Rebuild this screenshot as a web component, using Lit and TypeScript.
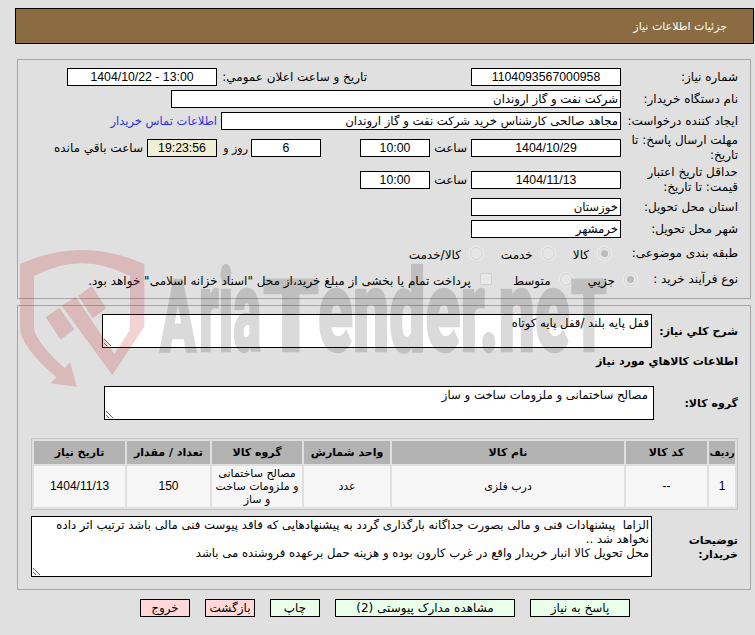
import { LitElement, html, css } from "lit";
import { customElement } from "lit/decorators.js";

@customElement("app-root")
export class AppRoot extends LitElement {
  static styles = css`
    :host {
      display: block;
      position: relative;
      width: 755px;
      height: 635px;
      overflow: hidden;
      background: #e0e0e0;
      color: #000;
      direction: rtl;
      font-family: "DejaVu Sans", sans-serif;
      font-size: 12px;
    }
    .num { font-family: "Liberation Sans", sans-serif; font-size: 12px; }
    .header {
      box-sizing: border-box;
      height: 36px;
      margin: 8px 1px 0 15px;
      padding-right: 26px;
      background: #8b6c42;
      border: 1px solid #000;
      color: #fff;
      font-size: 11px;
      display: flex;
      align-items: center;
    }
    .panel {
      border: 1px solid #a6a6a6;
      margin: 0 4px 0 17px;
      box-sizing: border-box;
    }
    .p1 { margin-top: 15px; height: 240px; padding: 8px 12px 0 0; }
    .p2 { margin-top: 6px; height: 285px; padding: 8px 12px 0 0; }
    .form {
      display: grid;
      grid-template-columns: 117px 1fr;
      grid-template-rows: 18px 18px 18px 28px 28px 18px 18px 22px 22px;
      row-gap: 4px;
    }
    .lbl { display: flex; align-items: center; line-height: 15px; padding-left: 4px; }
    .cell { display: flex; align-items: center; }
    .box {
      box-sizing: border-box;
      height: 18px;
      border: 1px solid #000;
      background: #fff;
      font-size: 11.7px;
      display: flex;
      align-items: center;
      padding: 0 2px;
      white-space: nowrap;
      overflow: hidden;
      flex: none;
    }
    .box.num { font-size: 12.3px; }
    .c { justify-content: center; }
    .w150 { width: 150px; }
    .w70 { width: 70px; }
    .w450 { width: 450px; }
    .w400 { width: 400px; }
    .timer { background: #efefd6; }
    .ml1 { margin-right: 104px; width: 150px; white-space: nowrap; }
    .link { color: #3030e0; font-size: 11.5px; margin-right: 4px; white-space: nowrap; }
    .sa { width: 41px; padding-right: 4px; box-sizing: border-box; }
    .gap39 { margin-right: 39px; }
    .rooz { width: 34px; padding-right: 3px; box-sizing: border-box; white-space: nowrap; font-size: 11px; }
    .rem { margin-right: 4px; white-space: nowrap; }
    .radio {
      box-sizing: border-box;
      width: 13px;
      height: 13px;
      border-radius: 50%;
      background: #e6e6e6;
      border: 1px solid #d2d2d2;
      box-shadow: 0 0 0 1px #ececec;
      flex: none;
      display: flex;
      align-items: center;
      justify-content: center;
    }
    .radio.on::after {
      content: "";
      width: 7px;
      height: 7px;
      border-radius: 50%;
      background: #bcbcbc;
    }
    .check {
      box-sizing: border-box;
      width: 12px;
      height: 12px;
      border: 1px solid #cfcfcf;
      border-radius: 2px;
      background: #e8e8e8;
      flex: none;
    }
    .t { margin-top: 3px; white-space: nowrap; }
    .opts { margin-right: 10px; }
    .opts .t { margin-right: 9px; margin-left: 18px; }
    .opts2 { margin-right: -16px; }
    .opts2 .t { margin-right: 9px; margin-left: 15px; }
    .opts2 .t.m { margin-left: 21px; }
    .b { font-weight: bold; font-size: 11px; }
    .row { display: grid; align-items: center; }
    .a { grid-template-columns: 86px 550px; height: 34px; }
    .sec { margin-top: 5px; height: 18px; line-height: 18px; }
    .g { grid-template-columns: 84px 550px; height: 34px; margin-top: 15px; }
    textarea {
      box-sizing: border-box;
      display: block;
      border: 1px solid #000;
      border-radius: 0;
      outline: 0;
      margin: 0;
      padding: 1px 2px;
      background: #fff;
      color: #000;
      font: inherit;
      font-size: 11.7px;
      line-height: 14px;
      direction: rtl;
      width: 100%;
      overflow: hidden;
      resize: both;
    }
    .a textarea, .g textarea { height: 34px; }
    .g textarea { padding-right: 5px; }
    .tbl {
      margin: 18px 0 0 0;
      box-sizing: border-box;
      width: 707px;
      height: 72px;
      table-layout: fixed;
      border: 1px solid #c4c4c4;
      border-spacing: 2px;
      border-collapse: separate;
      font-size: 11px;
    }
    .tbl th { background: #b3b3b3; height: 23px; padding: 0; font-weight: bold; }
    .tbl th.narrow { font-size: 9.5px; }
    .tbl td { background: #f6f6f6; height: 41px; padding: 0; text-align: center; line-height: 13px; white-space: nowrap; }
    .d { grid-template-columns: 86px 621px; height: 61px; margin-top: 6px; }
    .d textarea { height: 61px; }
    .d .b { line-height: 14px; padding-top: 3px; }
    .btns {
      display: flex;
      gap: 15px;
      margin: 9px 125px 0 0;
    }
    .btn {
      box-sizing: border-box;
      height: 18px;
      border: 1px solid #000;
      background: #e9ffe9;
      display: flex;
      align-items: center;
      justify-content: center;
      white-space: nowrap;
    }
    .pink { background: #ffd9d9; }
    .mark {
      position: absolute;
      left: 0;
      top: 240px;
      width: 640px;
      height: 160px;
      pointer-events: none;
      direction: ltr;
    }
    .mark-logo { fill: rgba(190, 30, 30, 0.2); }
    .mark-word { opacity: 0.14; }
    .mark-text {
      fill: #000;
      stroke: #000;
      stroke-width: 2.5px;
      font-family: "Roboto", sans-serif;
      font-weight: 900;
      font-size: 115px;
    }
    .mark-text.cap { font-size: 100px; }
  `;

  render() {
    return html`
      <div class="header">جزئیات اطلاعات نیاز</div>

      <div class="panel p1">
        <div class="form">
          <div class="lbl">شماره نیاز:</div>
          <div class="cell">
            <div class="box w150 c num">1104093567000958</div>
            <div class="ml1">تاریخ و ساعت اعلان عمومي:</div>
            <div class="box w150 c num" dir="ltr">1404/10/22 - 13:00</div>
          </div>

          <div class="lbl">نام دستگاه خریدار:</div>
          <div class="cell"><div class="box w450">شرکت نفت و گاز اروندان</div></div>

          <div class="lbl">ایجاد کننده درخواست:</div>
          <div class="cell">
            <div class="box w400">مجاهد صالحی کارشناس خرید شرکت نفت و گاز اروندان</div>
            <div class="link">اطلاعات تماس خریدار</div>
          </div>

          <div class="lbl">مهلت ارسال پاسخ: تا تاریخ:</div>
          <div class="cell">
            <div class="box w150 c num">1404/10/29</div>
            <div class="sa">ساعت</div>
            <div class="box w70 c num">10:00</div>
            <div class="box w70 c num gap39">6</div>
            <div class="rooz">روز و</div>
            <div class="box w70 c num timer">19:23:56</div>
            <div class="rem">ساعت باقي مانده</div>
          </div>

          <div class="lbl">حداقل تاریخ اعتبار قیمت: تا تاریخ:</div>
          <div class="cell">
            <div class="box w150 c num">1404/11/13</div>
            <div class="sa">ساعت</div>
            <div class="box w70 c num">10:00</div>
          </div>

          <div class="lbl">استان محل تحویل:</div>
          <div class="cell"><div class="box w150">خوزستان</div></div>

          <div class="lbl">شهر محل تحویل:</div>
          <div class="cell"><div class="box w150">خرمشهر</div></div>

          <div class="lbl">طبقه بندی موضوعی:</div>
          <div class="cell opts">
            <span class="radio on"></span><span class="t">کالا</span>
            <span class="radio"></span><span class="t">خدمت</span>
            <span class="radio"></span><span class="t">کالا/خدمت</span>
          </div>

          <div class="lbl">نوع فرآیند خرید :</div>
          <div class="cell opts2">
            <span class="radio on"></span><span class="t">جزیي</span>
            <span class="radio"></span><span class="t m">متوسط</span>
            <span class="check"></span><span class="t">پرداخت تمام یا بخشی از مبلغ خرید،از محل "اسناد خزانه اسلامی" خواهد بود.</span>
          </div>
        </div>
      </div>

      <div class="panel p2">
        <div class="row a">
          <div class="b">شرح کلي نیاز:</div>
          <textarea readonly>قفل پایه بلند /قفل پایه کوتاه</textarea>
        </div>
        <div class="sec b">اطلاعات کالاهاي مورد نیاز</div>
        <div class="row g">
          <div class="b">گروه کالا:</div>
          <textarea readonly>مصالح ساختمانی و ملزومات ساخت و ساز</textarea>
        </div>
        <table class="tbl">
          <colgroup>
            <col style="width:26px" /><col style="width:81px" /><col style="width:232px" />
            <col style="width:86px" /><col style="width:90px" /><col style="width:83px" /><col style="width:91px" />
          </colgroup>
          <tr>
            <th class="narrow">ردیف</th><th>کد کالا</th><th>نام کالا</th><th>واحد شمارش</th>
            <th>گروه کالا</th><th>تعداد / مقدار</th><th>تاریخ نیاز</th>
          </tr>
          <tr>
            <td class="num">1</td><td class="num">--</td><td>درب فلزی</td><td>عدد</td>
            <td>مصالح ساختمانی<br />و ملزومات ساخت<br />و ساز</td><td class="num">150</td><td class="num">1404/11/13</td>
          </tr>
        </table>
        <div class="row d">
          <div class="b">توضیحات خریدار:</div>
          <textarea readonly>الزاما  پیشنهادات فنی و مالی بصورت جداگانه بارگذاری گردد به پیشنهادهایی که فاقد پیوست فنی مالی باشد ترتیب اثر داده نخواهد شد ..
محل تحویل کالا انبار خریدار واقع در غرب کارون بوده و هزینه حمل برعهده فروشنده می باشد</textarea>
        </div>
      </div>

      <div class="btns">
        <div class="btn" style="width:100px">پاسخ به نیاز</div>
        <div class="btn" style="width:180px">مشاهده مدارک پیوستی (2)</div>
        <div class="btn" style="width:50px">چاپ</div>
        <div class="btn pink" style="width:50px">بازگشت</div>
        <div class="btn pink" style="width:50px">خروج</div>
      </div>

      <svg class="mark" viewBox="0 0 640 160">
        <g transform="translate(10 0) scale(0.3333)">
          <path class="mark-logo" d="M30,72 Q215,-12 403,72 L403,260 L307,405 L155,197 L197,170 L313,342 L360,270 L360,108 Q215,32 72,108 L72,270 Q90,320 165,385 L180,365 L200,440 L122,430 L140,412 Q30,320 30,260 Z" />
          <path class="mark-logo" d="M107,232 L148,203 L193,268 L152,299 Z M205,168 L245,138 L289,205 L248,235 Z" />
        </g>
        <g class="mark-word">
          <text class="mark-text cap" x="160" y="111" textLength="36" lengthAdjust="spacingAndGlyphs">A</text>
          <text class="mark-text" x="199" y="111" textLength="62" lengthAdjust="spacingAndGlyphs">ria</text>
          <text class="mark-text cap" x="263" y="111" textLength="56" lengthAdjust="spacingAndGlyphs">T</text>
          <text class="mark-text" x="318" y="111" textLength="252" lengthAdjust="spacingAndGlyphs">ender.ne</text>
          <text class="mark-text cap" x="571" y="111" textLength="36" lengthAdjust="spacingAndGlyphs">T</text>
        </g>
      </svg>
    `;
  }
}
